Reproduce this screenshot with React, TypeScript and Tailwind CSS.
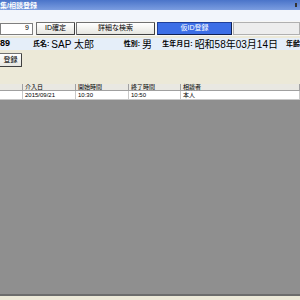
import React from "react";

const COLS = [
  { label: "", w: "w-[23px]" },
  { label: "介入日", w: "w-[53px]" },
  { label: "開始時間", w: "w-[53px]" },
  { label: "終了時間", w: "w-[52px]" },
  { label: "相談者", w: "flex-1" },
];

const ROW = ["", "2015/09/21", "10:30", "10:50", "本人"];

const font = { fontFamily: '"Liberation Sans", "Noto Sans CJK JP", sans-serif' };

function Btn({ children, className = "" }: { children?: React.ReactNode; className?: string }) {
  return (
    <div
      className={`h-[13px] flex items-center justify-center text-[7px] text-black bg-gradient-to-b from-[#ffffff] to-[#e6e6e0] border border-[#707070] border-r-[#404040] border-b-[#404040] rounded-[1px] ${className}`}
    >
      {children}
    </div>
  );
}

export default function App() {
  return (
    <div className="w-[300px] h-[300px] bg-[#ece9d8] flex flex-col overflow-hidden" style={font}>
      {/* title bar */}
      <div className="h-[10px] shrink-0 bg-gradient-to-b from-[#4a74c9] to-[#7b9de0] flex items-center">
        <span className="text-[7px] font-bold text-white leading-none">集/相談登録</span>
        <div className="ml-auto mr-[3px] w-[2px] h-[4px] bg-[#333]" />
      </div>
      <div className="h-[11px] shrink-0 bg-[#f2f5fb]" />

      {/* search row */}
      <div className="h-[15px] shrink-0 bg-[#f7f7f5] flex items-center gap-[1px]">
        <div className="w-[33px] h-[12px] bg-white border border-[#7f7f7f] flex items-center justify-end pr-[3px] text-[7px]">
          9
        </div>
        <Btn className="w-[39px] ml-[2px]">ID確定</Btn>
        <Btn className="w-[79px]">詳細な検索</Btn>
        <div className="w-[75px] h-[13px] ml-[1px] flex items-center justify-center text-[7px] text-white bg-[#3c6ee6] border border-[#1f3f99] border-r-[#102050] border-b-[#102050]">
          仮ID登録
        </div>
        <div className="flex-1 h-[13px] bg-[#ededed] border border-[#b0b0b0]" />
      </div>
      <div className="h-[2px] shrink-0 bg-[#ece9d8]" />

      {/* patient info */}
      <div className="h-[12px] shrink-0 bg-[#e5eef9] flex items-center text-black whitespace-nowrap">
        <span className="text-[9px] font-bold w-[36px]">89</span>
        <span className="text-[7px] font-bold">氏名:</span>
        <span className="text-[10px] ml-[2px] w-[79px]">SAP 太郎</span>
        <span className="text-[7px] font-bold">性別:</span>
        <span className="text-[10px] ml-[2px] w-[22px]">男</span>
        <span className="text-[7px] font-bold">生年月日:</span>
        <span className="text-[10px] ml-[2px]">昭和58年03月14日</span>
        <span className="text-[7px] font-bold ml-[8px]">年齢</span>
      </div>

      <div className="h-[3px] shrink-0" />
      <div className="flex shrink-0">
        <Btn className="w-[23px] h-[14px] -ml-[1px]">登録</Btn>
      </div>
      <div className="h-[17px] shrink-0" />

      {/* grid */}
      <div className="flex shrink-0 h-[7px] bg-[#e9e8e2] border-b border-[#a0a0a0]">
        {COLS.map((c, i) => (
          <div key={i} className={`${c.w} border-r border-[#a0a0a0] text-[6px] leading-[7px] pl-[2px] text-black`}>
            {c.label}
          </div>
        ))}
      </div>
      <div className="flex shrink-0 h-[9px] bg-white border-b border-[#c8c8c8]">
        {COLS.map((c, i) => (
          <div key={i} className={`${c.w} border-r border-[#c8c8c8] text-[6px] leading-[9px] pl-[2px] text-black`}>
            {ROW[i]}
          </div>
        ))}
      </div>
      <div className="flex-1 bg-[#8f8f8f] border-b-2 border-[#6c6c6c]" />
      <div className="h-[4px] shrink-0 bg-[#ece9d8]" />
    </div>
  );
}
